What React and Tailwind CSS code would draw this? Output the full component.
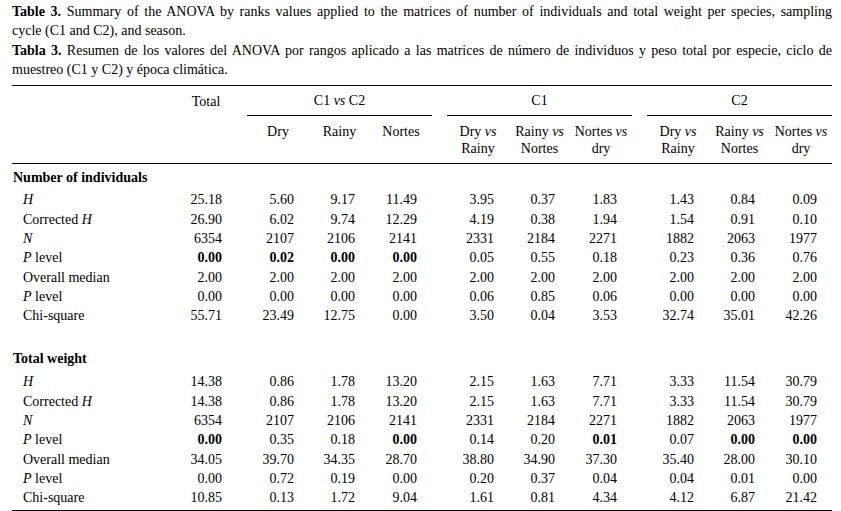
import React from "react";

const colW = [
  "w-[62px]",
  "w-[62px]", "w-[61px]", "w-[62px]",
  "w-[62px]", "w-[61px]", "w-[62px]",
  "w-[62px]", "w-[61px]", "w-[62px]",
];

// spacer widths placed after a given column index
const spacerAfter = { 0: "w-[10px]", 3: "w-[15px]", 6: "w-[15px]" };

const Vs = () => <i>vs</i>;

const subHeads = [
  ["Dry"],
  ["Rainy"],
  ["Nortes"],
  [<>Dry <Vs /></>, "Rainy"],
  [<>Rainy <Vs /></>, "Nortes"],
  [<>Nortes <Vs /></>, "dry"],
  [<>Dry <Vs /></>, "Rainy"],
  [<>Rainy <Vs /></>, "Nortes"],
  [<>Nortes <Vs /></>, "dry"],
];

const individuals = [
  { label: <i>H</i>, v: ["25.18", "5.60", "9.17", "11.49", "3.95", "0.37", "1.83", "1.43", "0.84", "0.09"] },
  { label: <>Corrected <i>H</i></>, v: ["26.90", "6.02", "9.74", "12.29", "4.19", "0.38", "1.94", "1.54", "0.91", "0.10"] },
  { label: <i>N</i>, v: ["6354", "2107", "2106", "2141", "2331", "2184", "2271", "1882", "2063", "1977"] },
  { label: <><i>P</i> level</>, v: ["0.00", "0.02", "0.00", "0.00", "0.05", "0.55", "0.18", "0.23", "0.36", "0.76"], bold: [0, 1, 2, 3] },
  { label: "Overall median", v: ["2.00", "2.00", "2.00", "2.00", "2.00", "2.00", "2.00", "2.00", "2.00", "2.00"] },
  { label: <><i>P</i> level</>, v: ["0.00", "0.00", "0.00", "0.00", "0.06", "0.85", "0.06", "0.00", "0.00", "0.00"] },
  { label: "Chi-square", v: ["55.71", "23.49", "12.75", "0.00", "3.50", "0.04", "3.53", "32.74", "35.01", "42.26"] },
];

const weight = [
  { label: <i>H</i>, v: ["14.38", "0.86", "1.78", "13.20", "2.15", "1.63", "7.71", "3.33", "11.54", "30.79"] },
  { label: <>Corrected <i>H</i></>, v: ["14.38", "0.86", "1.78", "13.20", "2.15", "1.63", "7.71", "3.33", "11.54", "30.79"] },
  { label: <i>N</i>, v: ["6354", "2107", "2106", "2141", "2331", "2184", "2271", "1882", "2063", "1977"] },
  { label: <><i>P</i> level</>, v: ["0.00", "0.35", "0.18", "0.00", "0.14", "0.20", "0.01", "0.07", "0.00", "0.00"], bold: [0, 3, 6, 8, 9] },
  { label: "Overall median", v: ["34.05", "39.70", "34.35", "28.70", "38.80", "34.90", "37.30", "35.40", "28.00", "30.10"] },
  { label: <><i>P</i> level</>, v: ["0.00", "0.72", "0.19", "0.00", "0.20", "0.37", "0.04", "0.04", "0.01", "0.00"] },
  { label: "Chi-square", v: ["10.85", "0.13", "1.72", "9.04", "1.61", "0.81", "4.34", "4.12", "6.87", "21.42"] },
];

function Columns({ render }) {
  return colW.map((w, i) => (
    <React.Fragment key={i}>
      <div className={`${w} shrink-0`}>{render(i)}</div>
      {spacerAfter[i] && <div className={`${spacerAfter[i]} shrink-0`} />}
    </React.Fragment>
  ));
}

function DataRow({ row }) {
  const bold = row.bold || [];
  return (
    <div className="flex h-[19.3px] items-center">
      <div className="w-[163px] shrink-0 pl-[11px]">{row.label}</div>
      <Columns
        render={(i) => (
          <div className={`text-right pr-[15px] ${bold.includes(i) ? "font-bold" : ""}`}>
            {row.v[i]}
          </div>
        )}
      />
    </div>
  );
}

function Section({ title, rows, titleClass }) {
  return (
    <div>
      <div className={`flex items-center font-bold pl-[1px] ${titleClass}`}>{title}</div>
      {rows.map((r, i) => (
        <DataRow key={i} row={r} />
      ))}
    </div>
  );
}

export default function App() {
  return (
    <div className="min-h-screen bg-white text-black text-[14px] font-['Liberation_Serif','Times_New_Roman',serif]">
      <div className="ml-[12px] w-[820px] pt-[2px]">
        {/* caption */}
        <div className="leading-[19.3px]">
          <p className="text-justify [text-align-last:justify]">
            <b>Table 3.</b> Summary of the ANOVA by ranks values applied to the matrices of number of individuals and total weight per species, sampling
          </p>
          <p>cycle (C1 and C2), and season.</p>
          <p className="text-justify [text-align-last:justify]">
            <b>Tabla 3.</b> Resumen de los valores del ANOVA por rangos aplicado a las matrices de número de individuos y peso total por especie, ciclo de
          </p>
          <p>muestreo (C1 y C2) y época climática.</p>
        </div>

        {/* table */}
        <div className="mt-[6px] border-t border-b border-black">
          {/* header row 1 */}
          <div className="flex h-[30px] items-stretch">
            <div className="w-[163px] shrink-0" />
            <div className="w-[62px] shrink-0 flex items-center justify-center">Total</div>
            <div className="w-[10px] shrink-0" />
            <div className="w-[185px] shrink-0 flex items-center justify-center border-b border-black">
              C1&nbsp;<i>vs</i>&nbsp;C2
            </div>
            <div className="w-[15px] shrink-0" />
            <div className="w-[185px] shrink-0 flex items-center justify-center border-b border-black">C1</div>
            <div className="w-[15px] shrink-0" />
            <div className="w-[185px] shrink-0 flex items-center justify-center border-b border-black">C2</div>
          </div>

          {/* header row 2 */}
          <div className="flex h-[48px] border-b border-black">
            <div className="w-[163px] shrink-0" />
            <Columns
              render={(i) =>
                i === 0 ? null : (
                  <div className="pt-[7px] leading-[17px] text-center">
                    {subHeads[i - 1].map((l, k) => (
                      <div key={k}>{l}</div>
                    ))}
                  </div>
                )
              }
            />
          </div>

          <Section title="Number of individuals" rows={individuals} titleClass="h-[26px]" />
          <div className="h-[19px]" />
          <Section title="Total weight" rows={weight} titleClass="h-[28px]" />
          <div className="h-[3px]" />
        </div>
      </div>
    </div>
  );
}
